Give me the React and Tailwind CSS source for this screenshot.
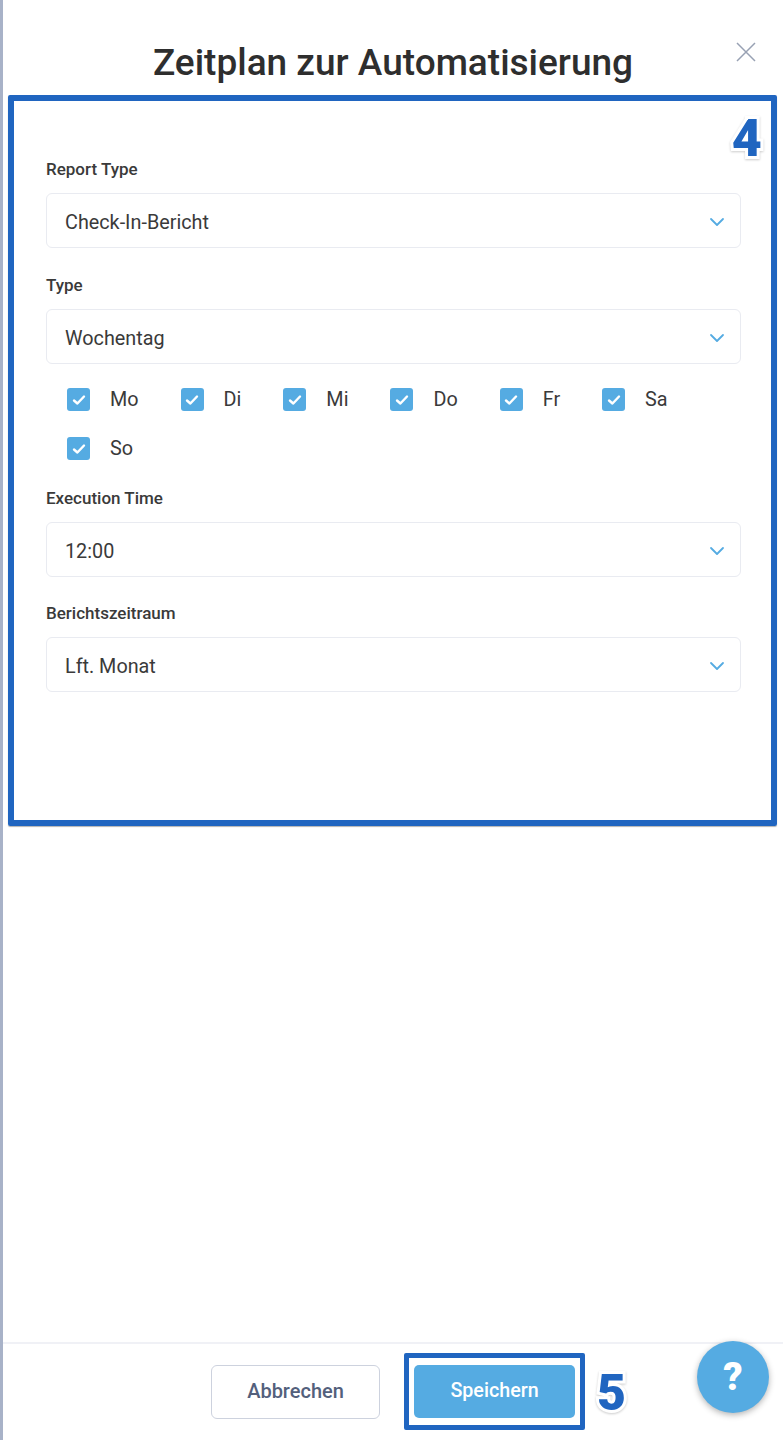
import React from 'react';

const days = ['Mo', 'Di', 'Mi', 'Do', 'Fr', 'Sa', 'So'];

const Chevron = () => (
  <svg className="mt-[2px] h-[10px] w-[16px]" viewBox="0 0 16 10" fill="none" stroke="#55abe2" strokeWidth="1.8" strokeLinecap="round" strokeLinejoin="round">
    <path d="M2 2l6 6 6-6" />
  </svg>
);

const Campo = ({ label, value }) => (
  <div>
    <label className="block text-[17px] leading-[20px] font-medium text-[#3a3a3a]">{label}</label>
    <div className="mt-[14px] flex h-[55px] items-center justify-between rounded-[6px] border border-[#e9ebf1] bg-white pl-[18px] pr-[15px]">
      <span className="pt-[5px] text-[19.8px] text-[#3a3a3a]">{value}</span>
      <Chevron />
    </div>
  </div>
);

const Dia = ({ name }) => (
  <div className="flex items-center gap-[20px]">
    <span className="flex h-[23px] w-[23px] items-center justify-center rounded-[3px] bg-[#55abe2]">
      <svg className="h-[12px] w-[14px]" viewBox="0 0 14 12" fill="none" stroke="white" strokeWidth="2.4" strokeLinecap="round" strokeLinejoin="round">
        <path d="M2 6.5l3.4 3L12 2.5" />
      </svg>
    </span>
    <span className="text-[19.8px] leading-[23px] text-[#3a3a3a]">{name}</span>
  </div>
);

const Numero = ({ children, className }) => (
  <span
    className={`absolute font-black text-[#2065c0] leading-none [-webkit-text-stroke:6px_white] [paint-order:stroke_fill] [filter:drop-shadow(0_1px_1px_rgba(0,0,0,0.2))] ${className}`}
  >
    {children}
  </span>
);

export default function App() {
  return (
    <div className="relative flex h-[1440px] flex-col overflow-hidden border-l-[3px] border-[#a8b2c8] bg-white font-['Roboto',sans-serif]">
      {/* Titulo */}
      <div className="relative h-[95px] shrink-0 pt-[39px] text-center">
        <h1 className="text-[37px] leading-[48px] font-medium text-[#2e2e2e]">Zeitplan zur Automatisierung</h1>
        <svg className="absolute right-[27px] top-[42px] h-[20px] w-[20px]" viewBox="0 0 20 20" fill="none" stroke="#98a1b3" strokeWidth="1.5">
          <path d="M1 1l18 18M19 1L1 19" />
        </svg>
      </div>

      {/* Formulario */}
      <div className="relative ml-[5px] mr-[6px] h-[731px] shrink-0 rounded-[2px] border-[6px] border-[#2065c0] pl-[32px] pr-[30px] pt-[58px] shadow-[0_1px_1px_rgba(0,0,0,0.3)]">
        <Numero className="right-[9px] top-[12px] text-[52px]">4</Numero>
        <Campo label="Report Type" value="Check-In-Bericht" />
        <div className="mt-[27px]">
          <Campo label="Type" value="Wochentag" />
        </div>
        <div className="mt-[24px] flex flex-wrap gap-x-[42px] gap-y-[26px] pl-[21px]">
          {days.map((d) => (
            <Dia key={d} name={d} />
          ))}
        </div>
        <div className="mt-[28px]">
          <Campo label="Execution Time" value="12:00" />
        </div>
        <div className="mt-[26px]">
          <Campo label="Berichtszeitraum" value="Lft. Monat" />
        </div>
      </div>

      {/* Pie */}
      <div className="relative mt-[516px] flex h-[98px] flex-1 items-start gap-[24px] border-t-2 border-[#f0f1f6] pl-[208px] pt-[9px]">
        <button className="mt-[12px] h-[54px] w-[169px] rounded-[6px] border border-[#cdd2de] bg-white pb-[2px] text-[20px] font-medium text-[#53607c]">
          Abbrechen
        </button>
        <div className="rounded-[2px] border-[5px] border-[#2065c0] px-[5px] py-[7px]">
          <button className="block h-[53px] w-[161px] rounded-[5px] bg-[#55abe2] pb-[2px] text-[19.7px] font-medium text-white">
            Speichern
          </button>
        </div>
        <Numero className="left-[594px] top-[24px] text-[50px]">5</Numero>
        <div className="absolute left-[694px] top-[-3px] flex h-[72px] w-[72px] items-center justify-center rounded-full bg-[#55abe2] text-[38px] font-black text-white shadow-[0_2px_6px_rgba(0,0,0,0.3)]">
          ?
        </div>
      </div>
    </div>
  );
}
